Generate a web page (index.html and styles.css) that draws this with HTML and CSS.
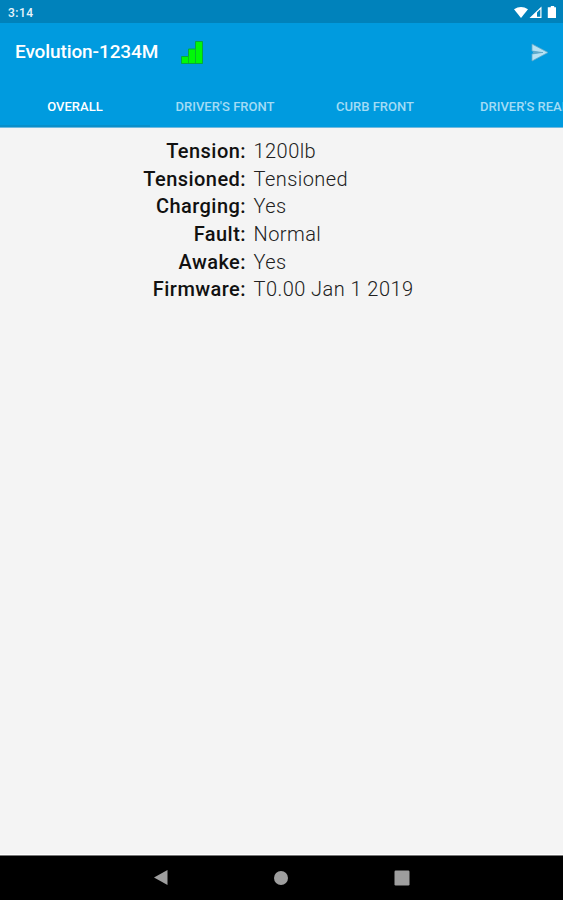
FILE: index.html
```html
<!DOCTYPE html>
<html lang="en">
<head>
<meta charset="utf-8">
<title>Evolution-1234M</title>
<link rel="stylesheet" href="styles.css">
</head>
<body>
<div class="screen">
  <div class="status">
    <span class="time">3:14</span>
    <svg class="status-icons" width="46" height="14" viewBox="0 0 46 14" fill="#fff">
      <path d="M1 3.3Q8 -1.3 15 3.3L8 12Z"/>
      <path fill-rule="evenodd" d="M16.5 12L28.5 0.5V12ZM24 10.8H27.3V3.2L24 6.5Z"/>
      <path d="M36 1.2H37.8V0H41.2V1.2H43V12H34.8V1.2Z"/>
    </svg>
  </div>
  <header class="toolbar">
    <h1 class="title">Evolution-1234M</h1>
    <svg class="signal" width="24" height="24" viewBox="0 0 24 24">
      <path d="M1.5 15.5H8.5V8H15.5V.5H22.5V22.5H1.5Z" fill="#00f808" stroke="#07a83c"/>
      <path d="M8.5 15.5V22M15.5 8V22" stroke="#06b92b"/>
    </svg>
    <svg class="send" width="18" height="19" viewBox="0 0 18 19">
      <path d="M1 1L17 9.5L1 18V11L11 9.5L1 8Z" fill="#b5e2f4" stroke="#62a9c8" stroke-width=".8"/>
      <path d="M2 9.5H12" stroke="#62a9c8"/>
    </svg>
  </header>
  <nav class="tabs">
    <span class="tab active"><span class="label">OVERALL</span></span>
    <span class="tab"><span class="label">DRIVER'S FRONT</span></span>
    <span class="tab"><span class="label">CURB FRONT</span></span>
    <span class="tab"><span class="label">DRIVER'S REAR</span></span>
  </nav>
  <main class="content">
    <dl class="details">
      <dt><span>Tension:</span></dt><dd>1200lb</dd>
      <dt><span>Tensioned:</span></dt><dd>Tensioned</dd>
      <dt><span>Charging:</span></dt><dd>Yes</dd>
      <dt><span>Fault:</span></dt><dd>Normal</dd>
      <dt><span>Awake:</span></dt><dd>Yes</dd>
      <dt><span>Firmware:</span></dt><dd>T0.00 Jan 1 2019</dd>
    </dl>
  </main>
  <footer class="navbar">
    <svg width="16" height="17" viewBox="0 0 16 17"><path d="M1 8.5L14.5 1V16Z" fill="#9e9e9e"/></svg>
    <svg width="16" height="16" viewBox="0 0 16 16"><circle cx="8" cy="8" r="7" fill="#9e9e9e"/></svg>
    <svg width="16" height="16" viewBox="0 0 16 16"><rect x=".5" y=".5" width="15" height="15" rx="1.2" fill="#9e9e9e"/></svg>
  </footer>
</div>
</body>
</html>
```

FILE: styles.css
```css
* { box-sizing: border-box; }
body { margin: 0; font-family: Roboto, sans-serif; }
.screen {
  width: 563px;
  height: 900px;
  display: flex;
  flex-direction: column;
  overflow: hidden;
  background: #f4f4f4;
}
.status {
  height: 23px;
  flex: none;
  display: flex;
  justify-content: space-between;
  padding: 5px 4px 0 8px;
  background: #0082bb;
  color: #e8f5fb;
}
.time { font-size: 12px; line-height: 16px; font-weight: 500; letter-spacing: 0.5px; }
.status-icons { margin-top: 1px; }
.toolbar {
  height: 61px;
  flex: none;
  display: flex;
  align-items: center;
  padding: 0 14px 2px 15px;
  background: #009bdf;
}
.title { margin: 0 0 2px; font-size: 19px; font-weight: 500; line-height: 24px; letter-spacing: -0.1px; color: #fff; }
.signal { margin-left: 22px; }
.send { margin-left: auto; }
.tabs {
  height: 44px;
  flex: none;
  display: flex;
  background: #009bdf;
  border-bottom: 1px solid #6fb9df;
}
.tab {
  width: 150px;
  flex: none;
  padding-top: 15px;
  text-align: center;
  white-space: nowrap;
  font-size: 13px;
  line-height: 16px;
  font-weight: 500;
  color: #a3dcf5;
}
.active { color: #fff; border-bottom: 2px solid #088fca; }
.label { display: inline-block; }
.content { flex: 1; padding-top: 10px; border-bottom: 1px solid #fff; }
.details {
  margin: 0;
  display: grid;
  grid-template-columns: 246px 1fr;
  column-gap: 7.5px;
  grid-auto-rows: 27.7px;
  font-size: 20px;
  line-height: 27px;
  color: #202020;
}
dt { text-align: right; font-weight: 500; letter-spacing: 0.45px; color: #111; }
dd { margin: 0; font-weight: 300; letter-spacing: 0.45px; }
.navbar {
  height: 45px;
  flex: none;
  display: flex;
  align-items: center;
  justify-content: center;
  gap: 104.5px;
  padding: 0 1px 1px 0;
  background: #000;
  border-top: 1px solid #777;
}
```
